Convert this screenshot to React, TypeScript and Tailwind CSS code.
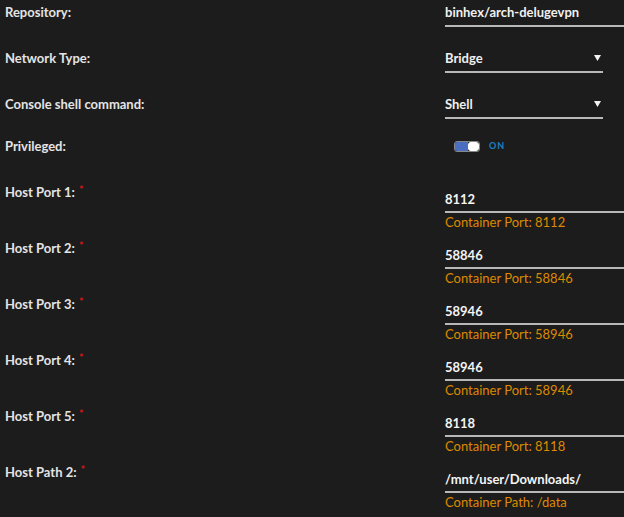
import React from 'react'

const ports = [
  { label: 'Host Port 1:', value: '8112', note: 'Container Port: 8112' },
  { label: 'Host Port 2:', value: '58846', note: 'Container Port: 58846' },
  { label: 'Host Port 3:', value: '58946', note: 'Container Port: 58946' },
  { label: 'Host Port 4:', value: '58946', note: 'Container Port: 58946' },
  { label: 'Host Port 5:', value: '8118', note: 'Container Port: 8118' },
  { label: 'Host Path 2:', value: '/mnt/user/Downloads/', note: 'Container Path: /data' },
]

const Arrow = () => (
  <svg width="7" height="6" viewBox="0 0 7 6" className="mr-[2px]">
    <path d="M0 0 H7 L3.5 6 Z" fill="#f2f2f2" />
  </svg>
)

const Label: React.FC<{ text: string; req?: boolean; className?: string }> = ({ text, req, className }) => (
  <div className={'w-[445px] shrink-0 pl-[5px] leading-4 text-[#e4e4e4] ' + (className || '')}>
    {text}
    {req && <span className="relative -top-[3px] ml-[4px] text-[11px] text-[#d41414]">*</span>}
  </div>
)

export default function App() {
  return (
    <div
      className="h-[517px] w-[624px] overflow-hidden bg-[#1c1c1c] text-[13px] font-bold"
      style={{ fontFamily: 'Lato, "Liberation Sans", sans-serif' }}
    >
      <div className="flex h-[46px] items-start pt-[4px]">
        <Label text="Repository:" />
        <div className="h-[23px] flex-1 border-b-2 border-[#b8b8b8] leading-4 text-[#f0f0f0]">
          binhex/arch-delugevpn
        </div>
      </div>

      <div className="flex h-[46px] items-start pt-[4px]">
        <Label text="Network Type:" />
        <div className="flex h-[23px] w-[158px] items-start justify-between border-b-2 border-[#b8b8b8] leading-4 text-[#f0f0f0]">
          <span>Bridge</span>
          <span className="pt-[5px]"><Arrow /></span>
        </div>
      </div>

      <div className="flex h-[42px] items-start pt-[4px]">
        <Label text="Console shell command:" />
        <div className="flex h-[23px] w-[158px] items-start justify-between border-b-2 border-[#b8b8b8] leading-4 text-[#f0f0f0]">
          <span>Shell</span>
          <span className="pt-[5px]"><Arrow /></span>
        </div>
      </div>

      <div className="flex h-[38px] items-start pt-[4px]">
        <Label text="Privileged:" />
        <div className="flex h-4 items-center gap-[9px] pl-[9px]">
          <div className="flex h-[11px] w-[26px] overflow-hidden rounded-[3px] border border-[#888]">
            <div className="w-[13px] bg-[#4a6fc0]" />
            <div className="flex-1 rounded-[3px] bg-white" />
          </div>
          <span className="text-[9px] tracking-[1px] text-[#1a80c4]">ON</span>
        </div>
      </div>

      {ports.map((p, idx) => (
        <div key={'port_' + idx} className="flex h-[56px] items-start">
          <Label text={p.label} req className="pt-[12px]" />
          <div className="flex-1">
            <div className="h-[41px] border-b-2 border-[#b8b8b8] pt-[19px] leading-4 text-[#f4f4f4]">
              {p.value}
            </div>
            <div className="pt-[1px] leading-4 font-normal text-[#dc8a00]">{p.note}</div>
          </div>
        </div>
      ))}
    </div>
  )
}
